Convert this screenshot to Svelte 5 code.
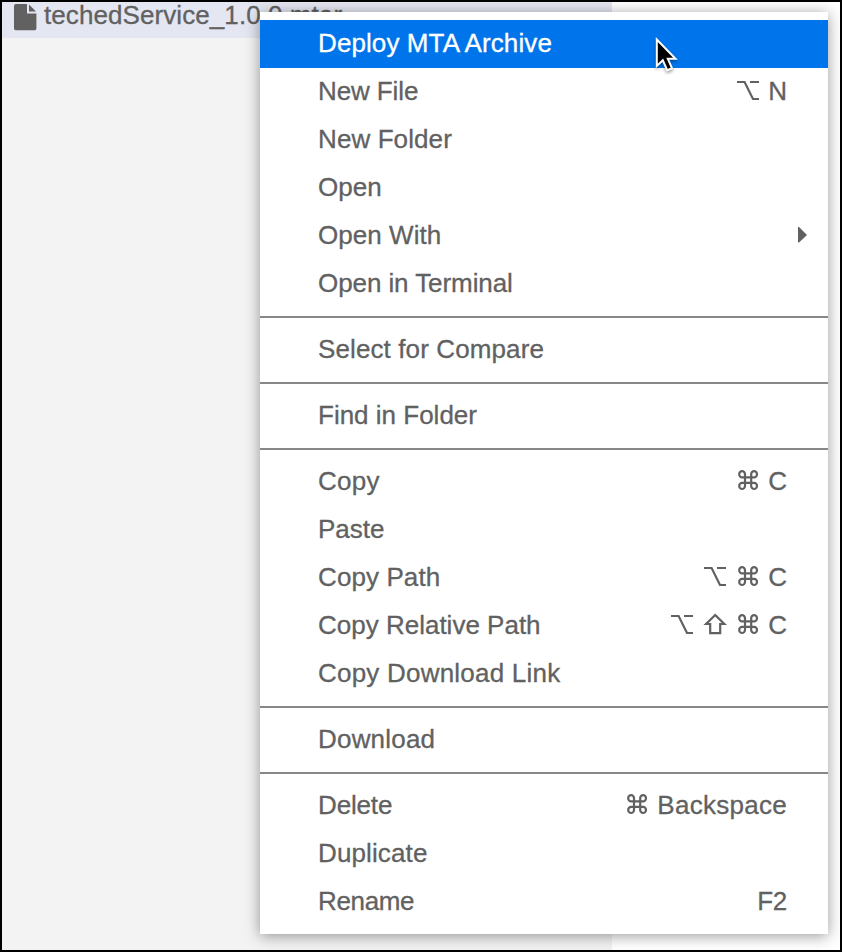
<script>
  const groups = [
    [
      { label: 'Deploy MTA Archive', tracking: 0.1, active: true },
      { label: 'New File', tracking: -0.1, icons: ['option'], key: 'N' },
      { label: 'New Folder', tracking: 0.1 },
      { label: 'Open' },
      { label: 'Open With', tracking: 0.05, submenu: true },
      { label: 'Open in Terminal', tracking: -0.08 }
    ],
    [{ label: 'Select for Compare', tracking: 0.11 }],
    [{ label: 'Find in Folder' }],
    [
      { label: 'Copy', tracking: 0.3, icons: ['command'], key: 'C' },
      { label: 'Paste' },
      { label: 'Copy Path', tracking: 0.1, icons: ['option', 'command'], key: 'C' },
      { label: 'Copy Relative Path', icons: ['option', 'shift', 'command'], key: 'C' },
      { label: 'Copy Download Link', tracking: 0.22 }
    ],
    [{ label: 'Download', tracking: 0.2 }],
    [
      { label: 'Delete', tracking: -0.15, icons: ['command'], key: 'Backspace', keyTracking: 0.28 },
      { label: 'Duplicate', tracking: 0.12 },
      { label: 'Rename', tracking: -0.35, key: 'F2', keyTracking: -0.3 }
    ]
  ];
</script>

<div class="window">
  <div class="sidebar">
    <div class="file">
      <svg class="doc" width="23" height="27" viewBox="0 0 23 27">
        <path d="M2 0H13V9.5H22.4V24.6Q22.4 26.3 20.7 26.3H1.7Q0 26.3 0 24.6V2Q0 0 2 0ZM15 .4L22 7.5H15Z" />
      </svg>
      <span class="name">techedService_1.0.0.mtar</span>
    </div>
  </div>

  <div class="menu" role="menu">
    {#each groups as group}
      <div class="group">
        {#each group as item}
          <div class="item" class:active={item.active} role="menuitem" tabindex="-1">
            <span class="label" style:letter-spacing="{item.tracking ?? 0}px">{item.label}</span>
            {#if item.key}
              <span class="shortcut">
                {#each item.icons ?? [] as icon}
                  <svg width="26" height="48" viewBox="0 0 26 48">
                    {#if icon === 'option'}
                      <path d="M2 14H9.6L18 31H24M15 14H24" />
                    {:else if icon === 'shift'}
                      <path d="M13.2 13L22.3 22H18.2V31.1H8.2V22H4.1Z" />
                    {:else}
                      <path d="M10 19V16.2A2.9 3.1 0 1 0 7.1 19.3H19.1A2.9 3.1 0 1 0 16.2 16.2V27.9A2.9 3.1 0 1 0 19.1 24.8H7.1A2.9 3.1 0 1 0 10 27.9Z" />
                    {/if}
                  </svg>
                {/each}
                <span style:letter-spacing="{item.keyTracking ?? 0}px">{item.key}</span>
              </span>
            {/if}
            {#if item.submenu}
              <svg class="arrow" width="10" height="16" viewBox="0 0 10 16"><path d="M0 0H1L9 8L1 15.5H0Z" /></svg>
            {/if}
          </div>
        {/each}
      </div>
    {/each}
  </div>

  <svg class="cursor" width="26" height="40" viewBox="0 0 26 40">
    <path d="M1.8 2.5V29L7.8 23.3L12.2 33.2L17 31.2L12.8 21.8H20.5Z" />
  </svg>
</div>

<style>
  :global(body) { margin: 0; }
  .window {
    position: relative;
    box-sizing: border-box;
    width: 842px;
    height: 952px;
    border: 2px solid #000;
    background: #fff;
    overflow: hidden;
    font: 26px/48px "Liberation Sans", Arial, sans-serif;
    color: #616161;
    -webkit-text-stroke: 0.3px currentColor;
  }
  .sidebar { width: 610px; height: 948px; background: #f3f3f3; }
  .file {
    display: flex;
    height: 36px;
    background: #e4e6f1;
    line-height: 27px;
    white-space: nowrap;
  }
  .doc { margin: 2px 7px 0 12px; fill: #616161; }
  .name { letter-spacing: 0.08px; }
  .menu {
    position: absolute;
    left: 258px;
    top: 10px;
    width: 568px;
    box-sizing: border-box;
    padding: 8px 0;
    background: #fff;
    box-shadow: 0 2px 14px rgba(0, 0, 0, 0.4);
  }
  .group + .group { margin-top: 8px; border-top: 2px solid #878787; padding-top: 8px; }
  .item {
    display: flex;
    justify-content: space-between;
    height: 48px;
    padding: 0 41px 0 58px;
    white-space: nowrap;
  }
  .label, .shortcut > span { line-height: 46px; }
  .active { background: #0075eb; color: #fff; }
  .shortcut { display: flex; gap: 7.2px; }
  .shortcut path { fill: none; stroke: #616161; stroke-width: 2.2; }
  .arrow { margin: 15px -21px 0 0; fill: #616161; }
  .cursor {
    position: absolute;
    left: 653px;
    top: 35px;
    filter: drop-shadow(0 2px 1.5px rgba(0, 0, 0, 0.35));
  }
  .cursor path { fill: #000; stroke: #fff; stroke-width: 2; }
</style>
